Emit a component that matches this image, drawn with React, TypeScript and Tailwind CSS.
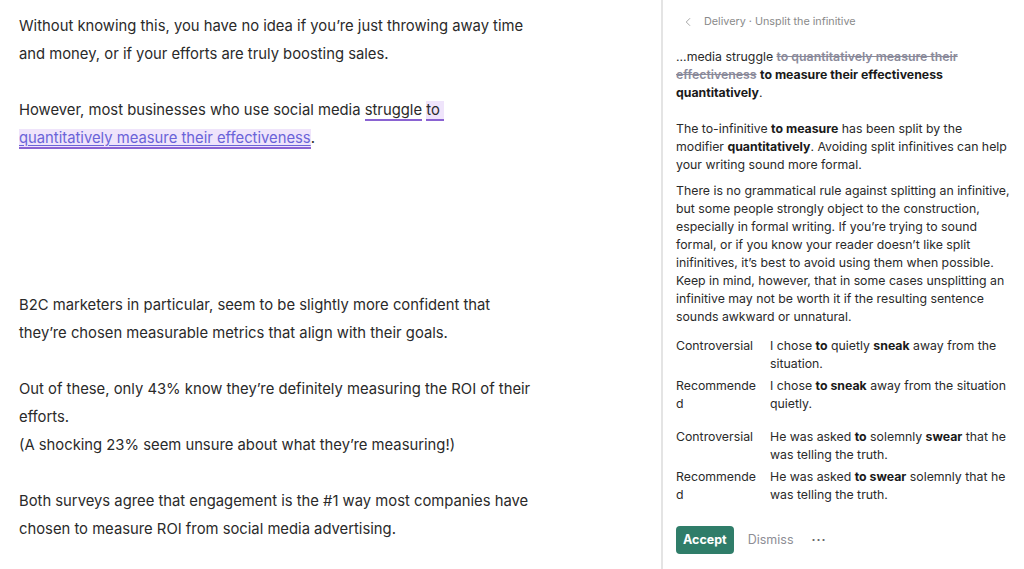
import { ChevronLeft } from 'lucide-react';

const examples = [
  {
    label: 'Controversial',
    text: (
      <>
        I chose <b className="font-bold text-[#1a1a1a]">to</b> quietly <b className="font-bold text-[#1a1a1a]">sneak</b> away from the situation.
      </>
    ),
  },
  {
    label: 'Recommended',
    text: (
      <>
        I chose <b className="font-bold text-[#1a1a1a]">to sneak</b> away from the situation quietly.
      </>
    ),
  },
  {
    label: 'Controversial',
    text: (
      <>
        He was asked <b className="font-bold text-[#1a1a1a]">to</b> solemnly <b className="font-bold text-[#1a1a1a]">swear</b> that he was telling the truth.
      </>
    ),
  },
  {
    label: 'Recommended',
    text: (
      <>
        He was asked <b className="font-bold text-[#1a1a1a]">to swear</b> solemnly that he was telling the truth.
      </>
    ),
  },
];

export default function App() {
  return (
    <div className="flex h-[569px] w-[1024px] overflow-hidden bg-white font-['Inter',_'Liberation_Sans',_sans-serif]">
      {/* Editor */}
      <div className="w-[661px] shrink-0 pl-[19px] pt-[12px] text-[14.8px] leading-[28px] text-[#2a2a2a]">
        <p className="mb-[28px]">
          Without knowing this, you have no idea if you’re just throwing away time
          <br />
          and money, or if your efforts are truly boosting sales.
        </p>
        <p>
          However, most businesses who use social media{' '}
          <span className="border-b-2 border-[#8a63d2]">struggle</span>{' '}
          <span className="border-b-2 border-[#8a63d2] bg-[#efe4fb] text-[#2a2a2a]">to&nbsp;</span>
          <br />
          <span className="border-b-2 border-[#8a63d2] bg-[#efe4fb] text-[#6a63d8] underline decoration-[#6a63d8] underline-offset-2">
            quantitatively measure their effectiveness
          </span>
          .
        </p>
        <div className="h-[139px]" />
        <p className="mb-[28px]">
          B2C marketers in particular, seem to be slightly more confident that
          <br />
          they’re chosen measurable metrics that align with their goals.
        </p>
        <p className="mb-[28px]">
          Out of these, only 43% know they’re definitely measuring the ROI of their
          <br />
          efforts.
          <br />
          (A shocking 23% seem unsure about what they’re measuring!)
        </p>
        <p>
          Both surveys agree that engagement is the #1 way most companies have
          <br />
          chosen to measure ROI from social media advertising.
        </p>
      </div>

      {/* Suggestion panel */}
      <div className="flex flex-1 flex-col border-l-2 border-[#e4e4e4] pl-[13px] pr-[13px] pt-[12px] text-[12.3px] leading-[18px] text-[#2a2a2a]">
        <div className="flex h-[20px] items-center text-[10.8px] text-[#8a8a8a]">
          <ChevronLeft className="ml-[5px] h-[14px] w-[14px] text-[#9a9a9a]" strokeWidth={1.5} />
          <span className="ml-[9px]">Delivery · Unsplit the infinitive</span>
        </div>

        <p className="mt-[16px]">
          ...media struggle{' '}
          <span className="text-[#8a8a9a] line-through decoration-[#8a8a9a] font-semibold">
            to quantitatively measure their effectiveness
          </span>{' '}
          <b className="font-bold text-[#1a1a1a]">to measure their effectiveness quantitatively</b>.
        </p>

        <p className="mt-[18px]">
          The to-infinitive <b className="font-bold text-[#1a1a1a]">to measure</b> has been split by the modifier{' '}
          <b className="font-bold text-[#1a1a1a]">quantitatively</b>. Avoiding split infinitives can help your writing sound more formal.
        </p>
        <p className="mt-[8px]">
          There is no grammatical rule against splitting an infinitive, but some people strongly object to the construction,
          especially in formal writing. If you’re trying to sound formal, or if you know your reader doesn’t like split
          inifinitives, it’s best to avoid using them when possible. Keep in mind, however, that in some cases unsplitting an
          infinitive may not be worth it if the resulting sentence sounds awkward or unnatural.
        </p>

        <div className="mt-[11px] flex flex-col">
          {examples.map((ex, i) => (
            <div key={i} className={`flex ${i === 2 ? 'mt-[15px]' : i > 0 ? 'mt-[4px]' : ''}`}>
              <div className="w-[86px] shrink-0 break-all">{ex.label}</div>
              <div className="ml-[8px] flex-1">{ex.text}</div>
            </div>
          ))}
        </div>

        <div className="mt-[22px] flex items-center">
          <button className="h-[28px] rounded-[4px] bg-[#2f7d69] px-[7px] text-[12.5px] font-bold text-white">Accept</button>
          <button className="ml-[14px] text-[12.5px] text-[#8d8d95]">Dismiss</button>
          <span className="ml-[18px] text-[12px] font-bold tracking-[1px] text-[#666]">···</span>
        </div>
      </div>
    </div>
  );
}
